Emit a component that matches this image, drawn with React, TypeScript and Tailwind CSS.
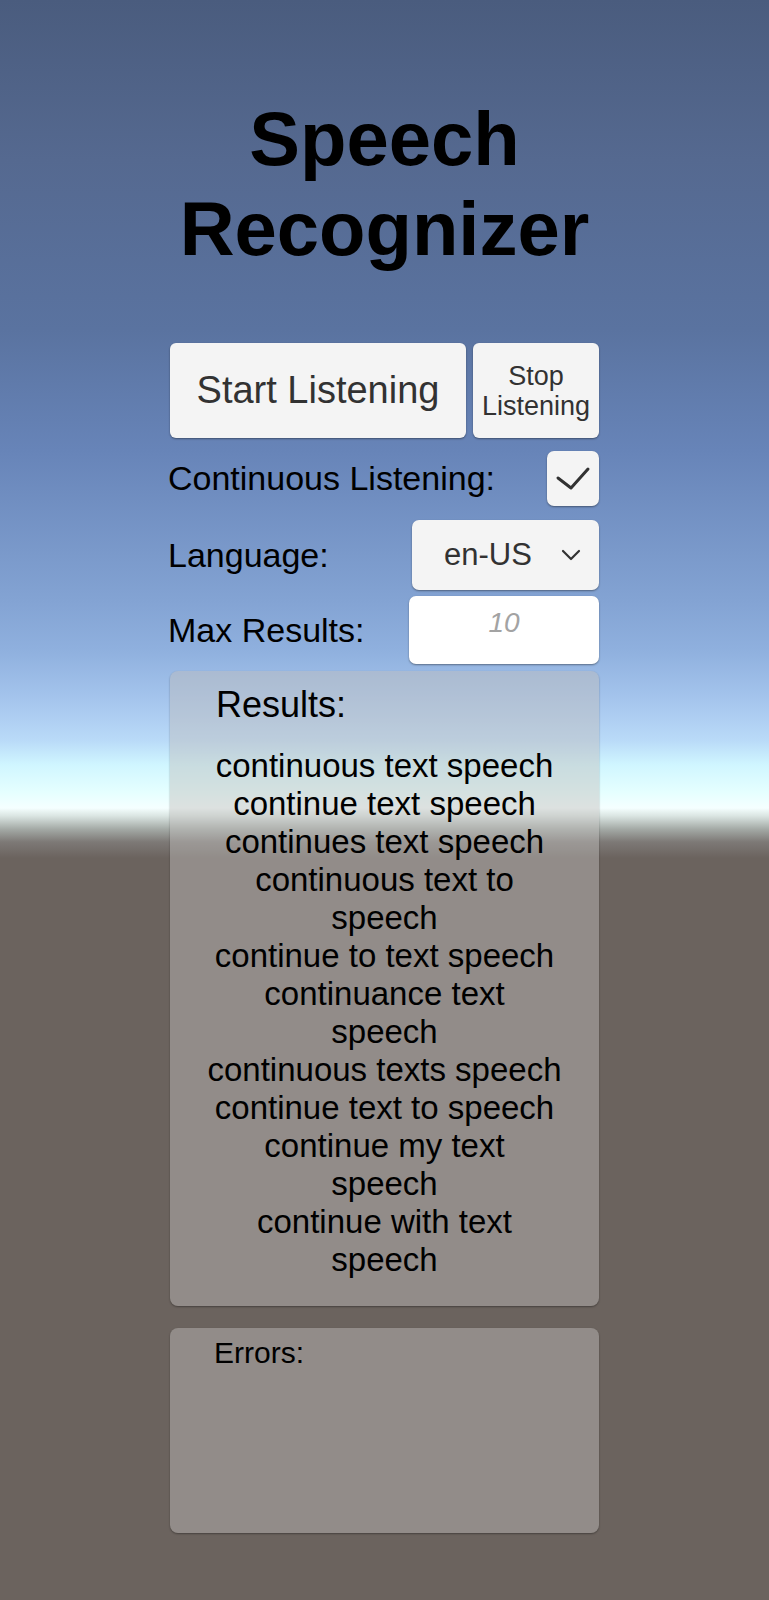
import React from 'react';

const results: string[][] = [
    ['continuous text speech'],
    ['continue text speech'],
    ['continues text speech'],
    ['continuous text to', 'speech'],
    ['continue to text speech'],
    ['continuance text', 'speech'],
    ['continuous texts speech'],
    ['continue text to speech'],
    ['continue my text', 'speech'],
    ['continue with text', 'speech'],
];

const Panel: React.FC<{ className?: string; children: React.ReactNode }> = ({ className = '', children }) => (
    <div className={`rounded-[8px] bg-[rgba(192,190,187,0.46)] shadow-[0_1px_2px_rgba(0,0,0,0.35)] ${className}`}>{children}</div>
);

const App: React.FC = () => {
    return (
        <div className="min-h-[1600px] w-full bg-[linear-gradient(to_bottom,#4a5c7e_0px,#556990_160px,#5a73a0_330px,#6784b8_450px,#83a3d3_600px,#8fb0de_650px,#a5c5ed_700px,#b9daf8_740px,#d0f6ff_765px,#e5ffff_792px,#f5ffff_808px,#dae5e2_816px,#a4aaa6_829px,#7d7976_842px,#6b635e_858px,#6b635e_100%)] font-['Liberation_Sans',Arial,sans-serif] text-black">
            <div className="mx-auto w-[429px] pt-[94px]">
                <h1 className="text-center text-[76px] font-bold leading-[90px]">
                    Speech
                    <br />
                    Recognizer
                </h1>

                {/* listen buttons */}
                <div className="mt-[69px] flex h-[95px] gap-[7px]">
                    <button className="w-[296px] rounded-[6px] bg-[#f4f4f4] text-[38px] text-[#323232] shadow-[0_1px_2px_rgba(0,0,0,0.4)]">
                        Start Listening
                    </button>
                    <button className="flex-1 rounded-[6px] bg-[#f4f4f4] text-[27px] leading-[30px] text-[#323232] shadow-[0_1px_2px_rgba(0,0,0,0.4)]">
                        Stop
                        <br />
                        Listening
                    </button>
                </div>

                <div className="mt-[13px] flex h-[55px] items-center justify-between">
                    <span className="-ml-[2px] text-[34px]">Continuous Listening:</span>
                    <div className="flex h-[55px] w-[52px] items-center justify-center rounded-[7px] bg-[#f4f4f4] shadow-[0_1px_2px_rgba(0,0,0,0.4)]">
                        <svg width="36" height="28" viewBox="0 0 36 28" fill="none">
                            <polyline points="3,13 16,23 33,4" stroke="#323232" strokeWidth="3" strokeLinecap="round" strokeLinejoin="round" />
                        </svg>
                    </div>
                </div>

                <div className="mt-[14px] flex h-[70px] items-center justify-between">
                    <span className="-ml-[2px] text-[34px]">Language:</span>
                    <div className="flex h-[70px] w-[187px] items-center rounded-[7px] bg-[#f4f4f4] pl-[32px] pr-[18px] shadow-[0_1px_2px_rgba(0,0,0,0.4)]">
                        <span className="flex-1 text-[31px] text-[#323232]">en-US</span>
                        <svg width="20" height="12" viewBox="0 0 20 12" fill="none">
                            <polyline points="2,2 10,10 18,2" stroke="#323232" strokeWidth="2.2" strokeLinecap="round" strokeLinejoin="round" />
                        </svg>
                    </div>
                </div>

                <div className="mt-[6px] flex h-[68px] items-center justify-between">
                    <span className="-ml-[2px] text-[34px]">Max Results:</span>
                    <input
                        type="text"
                        placeholder="10"
                        className="h-[68px] w-[190px] rounded-[7px] bg-white pb-[14px] text-center text-[28px] text-[#323232] shadow-[0_1px_2px_rgba(0,0,0,0.4)] outline-none placeholder:italic placeholder:text-[#a3a3a3]"
                    />
                </div>

                <Panel className="mt-[7px] h-[635px] pt-[14px]">
                    <div className="pl-[46px] text-[36px] leading-[40px]">Results:</div>
                    <div className="mt-[22px] text-center text-[33px] leading-[38px]">
                        {results.map((lines, i) => (
                            <div key={i}>
                                {lines.map((line, j) => (
                                    <div key={j}>{line}</div>
                                ))}
                            </div>
                        ))}
                    </div>
                </Panel>

                <Panel className="mt-[22px] h-[205px] pt-[8px]">
                    <div className="pl-[44px] text-[30px] leading-[34px]">Errors:</div>
                </Panel>
            </div>
        </div>
    );
};

export default App;
